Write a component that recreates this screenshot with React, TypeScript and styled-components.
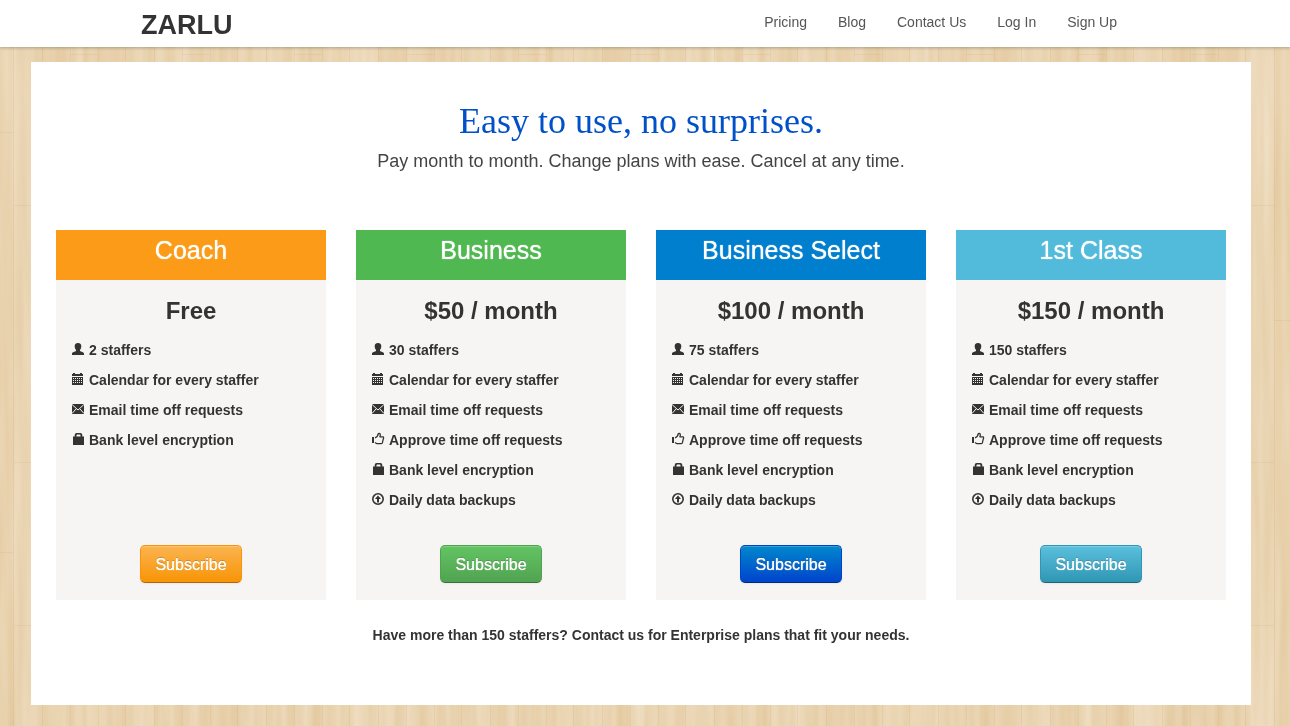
import React from "react";
import styled, { createGlobalStyle } from "styled-components";

const GlobalStyle = createGlobalStyle`
  * { box-sizing: border-box; }
  body {
    margin: 0;
    background: #ead4b1;
    color: #333;
    font: 14px/20px "Liberation Sans", Arial, sans-serif;
  }
`;

const WoodSvg = styled.svg`
  position: fixed;
  inset: 0;
  z-index: -1;
  width: 100%;
  height: 100%;
`;

const Header = styled.header`
  background: #fff;
  box-shadow: 0 1px 3px rgba(0, 0, 0, 0.25);
  padding: 0 8px 0 0;
`;

const HeaderInner = styled.div`
  display: flex;
  justify-content: space-between;
  align-items: center;
  max-width: 1000px;
  height: 47px;
  margin: 0 auto;
`;

const Brand = styled.a`
  color: #333;
  font-size: 27px;
  font-weight: bold;
  line-height: 40px;
  padding-top: 3px;
  text-decoration: none;
`;

const Nav = styled.nav`
  display: flex;
  gap: 31px;
  padding: 0 24px 3px 0;
`;

const NavLink = styled.a`
  color: #555;
  text-decoration: none;
`;

const Sheet = styled.main`
  margin: 15px 39px 21px 31px;
  padding: 39px 25px 60px;
  background: #fff;
  text-align: center;
`;

const Title = styled.h1`
  margin: 0;
  color: #0050c8;
  font: 36px/40px "Liberation Serif", "Times New Roman", serif;
`;

const Lead = styled.p`
  margin: 5px 0 54px;
  color: #444;
  font-size: 18px;
  line-height: 30px;
`;

const Plans = styled.div`
  display: grid;
  grid-template-columns: repeat(4, 1fr);
  gap: 30px;
`;

const Card = styled.section`
  display: flex;
  flex-direction: column;
  align-items: center;
  min-height: 370px;
  padding-bottom: 17px;
  background: #f7f5f4;
`;

const PlanName = styled.h2<{ $color: string }>`
  align-self: stretch;
  margin: 0;
  padding-bottom: 10px;
  background: ${(p) => p.$color};
  color: #fff;
  font-size: 25px;
  font-weight: normal;
  line-height: 40px;
  text-shadow: 0 0 1px #fff;
`;

const Price = styled.h3`
  margin: 11px 0 9px;
  font-size: 24px;
  line-height: 40px;
`;

const Features = styled.ul`
  align-self: stretch;
  flex: 1;
  margin: 0;
  padding: 0 15px;
  list-style: none;
`;

const Feature = styled.li`
  display: flex;
  align-items: center;
  gap: 4px;
  height: 20px;
  margin-bottom: 10px;
  font-weight: bold;
  text-align: left;
`;

const IconSvg = styled.svg`
  flex: none;
  width: 14px;
  height: 14px;
  margin-bottom: 2px;
  color: #333;
`;

const Subscribe = styled.button<{ $from: string; $to: string; $edge: string }>`
  height: 38px;
  padding: 1px 14px 0;
  border: 1px solid ${(p) => p.$to};
  border-bottom-color: ${(p) => p.$edge};
  border-radius: 5px;
  background: linear-gradient(${(p) => p.$from}, ${(p) => p.$to});
  box-shadow: inset 0 1px 0 rgba(255, 255, 255, 0.2), 0 1px 2px rgba(0, 0, 0, 0.05);
  color: #fff;
  font: 16px/20px "Liberation Sans", Arial, sans-serif;
  text-shadow: 0 0 1px #fff, 0 -1px 0 rgba(0, 0, 0, 0.25);
  cursor: pointer;
`;

const Enterprise = styled.p`
  margin: 25px 0 0;
  font-weight: bold;
`;

type IconName = "user" | "calendar" | "mail" | "thumb" | "bag" | "backup";

const drawings: Record<IconName, React.ReactNode> = {
  user: (
    <path
      fill="currentColor"
      d="M7 1C9.500 1 10.300 2.300 10.300 4.200C10.300 5.800 9.600 7.100 9 7.900V9C10 10 13 10 13 11.600V13H1V11.600C1 10 4 10 5 9V7.900C4.400 7.100 3.700 5.800 3.700 4.200C3.700 2.300 4.500 1 7 1Z"
    />
  ),
  calendar: (
    <g>
      <path fill="currentColor" d="M2 1h2v1h5V1h2v1h1v2H1V2h1zM1 5h11v8H1z" />
      <path fill="none" stroke="#f7f5f4" strokeWidth="1" strokeDasharray="1 1" d="M2 6.500h9M2 8.500h9M2 10.500h9" />
    </g>
  ),
  mail: (
    <g>
      <path fill="currentColor" d="M1 2h12v10H1z" />
      <path fill="none" stroke="#f7f5f4" strokeWidth="1" d="M1 2.500l6 5.500 6-5.500M1 11.500l4-4.500M13 11.500L9 7" />
    </g>
  ),
  thumb: (
    <g>
      <path fill="currentColor" d="M1 5h2v6H1z" />
      <path
        fill="none"
        stroke="currentColor"
        strokeWidth="1.300"
        strokeLinejoin="round"
        d="M4 5.800C6 5.200 7 3.500 7.300 1.600C9.200 1 9.900 2.500 8.900 4.800H12C12.700 4.800 12.700 6 12.400 6.700L11.400 10.700C11.100 11.500 10.700 11.700 10 11.700H6L4 10.500"
      />
    </g>
  ),
  bag: (
    <path
      fill="currentColor"
      fillRule="evenodd"
      d="M2 4.500h1.700V3q0-2 2-2h3.600q2 0 2 2v1.500H13V13H2zM5.500 4.500h4V3.200q0-.7-.7-.7H6.200q-.7 0-.7.700z"
    />
  ),
  backup: (
    <g>
      <circle cx="7" cy="7" r="5.200" fill="none" stroke="currentColor" strokeWidth="1.600" />
      <path fill="currentColor" d="M7 3.500L10 7H8v3.500H6V7H4z" />
    </g>
  ),
};

const Icon = ({ name }: { name: IconName }) => (
  <IconSvg viewBox="0 0 14 14" aria-hidden="true">
    {drawings[name]}
  </IconSvg>
);

const Wood = () => (
  <WoodSvg aria-hidden="true">
    <defs>
      <filter id="grain" x="0" y="0" width="100%" height="100%" colorInterpolationFilters="sRGB">
        <feTurbulence type="fractalNoise" baseFrequency="0.11 0.005" numOctaves="2" seed="8" />
        <feColorMatrix
          values="0.06 0 0 0 0.880
                  0.10 0 0 0 0.772
                  0.16 0 0 0 0.600
                  0 0 0 0 1"
        />
      </filter>
      <pattern id="planks" width="112" height="420" patternUnits="userSpaceOnUse">
        <path fill="#fff" fillOpacity="0.08" d="M14 0h28v420H14zM70 0h14v420H70z" />
        <path
          fill="none"
          stroke="#c79c62"
          strokeOpacity="0.15"
          d="M13.500 0v420M42.500 0v420M70.500 0v420M98.500 0v420M14 205.500h28M0 132.500h13M42 320.500h28M70 54.500h28M98 132.500h14M14 42.500h28"
        />
      </pattern>
    </defs>
    <rect width="100%" height="100%" filter="url(#grain)" />
    <rect width="100%" height="100%" fill="url(#planks)" />
  </WoodSvg>
);

const calendar: [IconName, string] = ["calendar", "Calendar for every staffer"];
const mail: [IconName, string] = ["mail", "Email time off requests"];
const approve: [IconName, string] = ["thumb", "Approve time off requests"];
const bank: [IconName, string] = ["bag", "Bank level encryption"];
const backups: [IconName, string] = ["backup", "Daily data backups"];
const full = [calendar, mail, approve, bank, backups];

const plans = [
  { name: "Coach", price: "Free", staffers: 2, features: [calendar, mail, bank], color: "#fc9b17", from: "#fbb450", to: "#f89406", edge: "#ad6704" },
  { name: "Business", price: "$50 / month", staffers: 30, features: full, color: "#50b850", from: "#62c462", to: "#51a351", edge: "#387038" },
  { name: "Business Select", price: "$100 / month", staffers: 75, features: full, color: "#007fcf", from: "#0088cc", to: "#0044cc", edge: "#002a80" },
  { name: "1st Class", price: "$150 / month", staffers: 150, features: full, color: "#52bbdb", from: "#5bc0de", to: "#2f96b4", edge: "#1f6377" },
];

export default function App() {
  return (
    <>
      <GlobalStyle />
      <Wood />
      <Header>
        <HeaderInner>
          <Brand href="#">ZARLU</Brand>
          <Nav>
            {["Pricing", "Blog", "Contact Us", "Log In", "Sign Up"].map((label) => (
              <NavLink key={label} href="#">
                {label}
              </NavLink>
            ))}
          </Nav>
        </HeaderInner>
      </Header>
      <Sheet>
        <Title>Easy to use, no surprises.</Title>
        <Lead>Pay month to month. Change plans with ease. Cancel at any time.</Lead>
        <Plans>
          {plans.map((plan) => (
            <Card key={plan.name}>
              <PlanName $color={plan.color}>{plan.name}</PlanName>
              <Price>{plan.price}</Price>
              <Features>
                <Feature>
                  <Icon name="user" />
                  {plan.staffers} staffers
                </Feature>
                {plan.features.map(([icon, text]) => (
                  <Feature key={text}>
                    <Icon name={icon} />
                    {text}
                  </Feature>
                ))}
              </Features>
              <Subscribe type="button" $from={plan.from} $to={plan.to} $edge={plan.edge}>
                Subscribe
              </Subscribe>
            </Card>
          ))}
        </Plans>
        <Enterprise>Have more than 150 staffers? Contact us for Enterprise plans that fit your needs.</Enterprise>
      </Sheet>
    </>
  );
}
